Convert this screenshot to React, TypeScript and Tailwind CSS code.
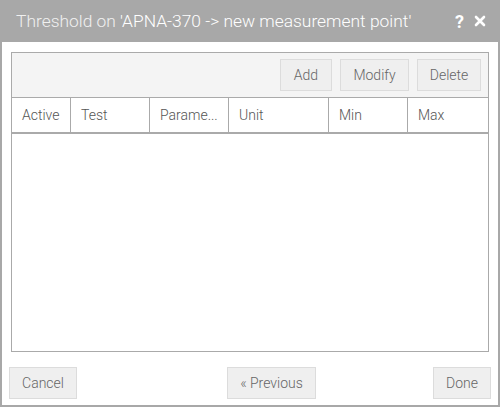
export default function App() {
  const cols = [
    { label: "Active", w: "w-[59px]" },
    { label: "Test", w: "w-[79px]" },
    { label: "Parame...", w: "w-[79px]" },
    { label: "Unit", w: "w-[100px]" },
    { label: "Min", w: "w-[79px]" },
    { label: "Max", w: "flex-1" },
  ];
  const btn =
    "h-[32px] border border-[#dcdcdc] bg-[#efefef] text-[14px] font-light text-[#666] flex items-center justify-center";
  return (
    <div
      className="w-[500px] h-[407px] flex flex-col bg-white"
      style={{ fontFamily: "Roboto, 'Liberation Sans', sans-serif" }}
    >
      <div className="h-[42px] bg-[#a8a8a8] flex items-center pl-[16px] pr-[14px]">
        <div className="flex-1 text-[17.4px] font-light text-[#f0f0f0] whitespace-nowrap">
          Threshold on <span className="text-white">'APNA-370 -&gt; new measurement point'</span>
        </div>
        <div className="flex items-center gap-[10px] text-white font-bold text-[18px]">
          <span>?</span>
          <svg width="12" height="12" viewBox="0 0 12 12">
            <path d="M2 2 L10 10 M10 2 L2 10" stroke="white" strokeWidth="2.6" strokeLinecap="round" />
          </svg>
        </div>
      </div>
      <div className="flex-1 flex flex-col border-x-2 border-b-2 border-[#a8a8a8]">
        <div className="px-[9px] pt-[10px]">
          <div className="h-[300px] border border-[#aaa] flex flex-col">
            <div className="h-[45px] bg-[#f4f4f4] flex items-center justify-end gap-[8px] pr-[7px] border-b border-[#aaa]">
              <div className={btn + " w-[52px]"}>Add</div>
              <div className={btn + " w-[69px]"}>Modify</div>
              <div className={btn + " w-[64px]"}>Delete</div>
            </div>
            <div className="h-[36px] flex border-b-2 border-[#aaa]">
              {cols.map((c, i) => (
                <div
                  key={c.label}
                  className={
                    c.w +
                    " flex items-center pl-[10px] text-[14px] font-light text-[#555] " +
                    (i < cols.length - 1 ? "border-r border-[#aaa]" : "")
                  }
                >
                  {c.label}
                </div>
              ))}
            </div>
            <div className="flex-1 bg-white" />
          </div>
        </div>
        <div className="flex items-start pt-[15px] px-[7px]">
          <div className={btn + " w-[68px]"}>Cancel</div>
          <div className={btn + " w-[89px] ml-[150px]"}>« Previous</div>
          <div className={btn + " w-[58px] ml-auto"}>Done</div>
        </div>
      </div>
    </div>
  );
}
